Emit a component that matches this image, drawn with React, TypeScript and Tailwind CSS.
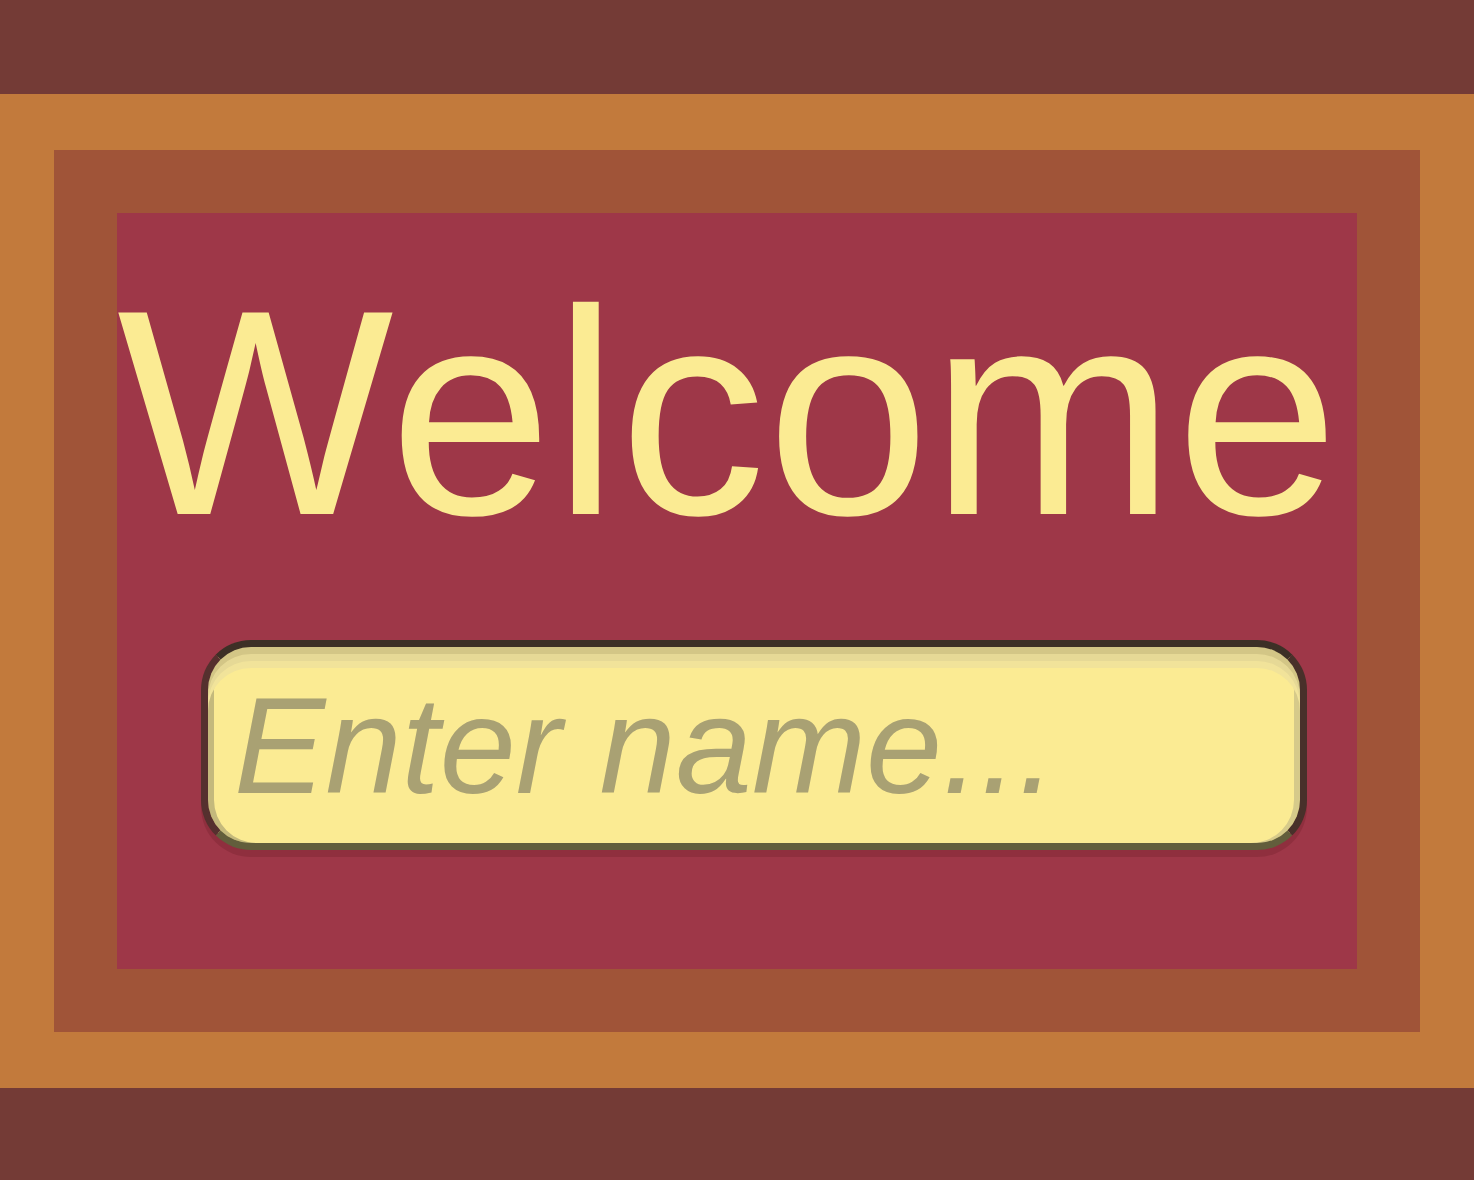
import React from "react";

export default function App() {
  return (
    <div className="w-[1474px] h-[1180px] bg-[#743b36] pt-[94px] pb-[92px] overflow-hidden">
      <div className="h-full bg-[#c27a3c] px-[54px] py-[56px]">
        <div className="h-full bg-[#a05438] p-[63px]">
          <div className="h-full bg-[#9e3748] flex flex-col overflow-hidden">
            <h1
              className="mt-[53px] h-[293px] text-[293px] leading-[293px] text-[#fbeb93] whitespace-nowrap tracking-[1px]"
              style={{ fontFamily: '"Liberation Sans", Arial, sans-serif' }}
            >
              Welcome
            </h1>
            <div className="mt-[81px] ml-[84px] w-[1106px] h-[210px] rounded-[50px] border-[7px] border-[#3d3026] border-l-[#55302e] border-r-[#48302a] border-b-[#625e3c] bg-[#fbeb93] shadow-[inset_0_7px_0_#d3c686,inset_0_14px_0_#e6d996,inset_0_21px_0_#f1e39a,inset_6px_0_0_#c4b97c,inset_-6px_0_0_#d6ca8a,0_7px_0_rgba(60,0,10,0.14)] flex items-center overflow-hidden">
              <input
                type="text"
                placeholder="Enter name..."
                className="w-full h-full bg-transparent outline-none pl-[26px] text-[137px] text-[#6b6440] placeholder:text-[#a9a173] placeholder:italic"
                style={{ fontFamily: '"Liberation Sans", Arial, sans-serif' }}
              />
            </div>
          </div>
        </div>
      </div>
    </div>
  );
}
